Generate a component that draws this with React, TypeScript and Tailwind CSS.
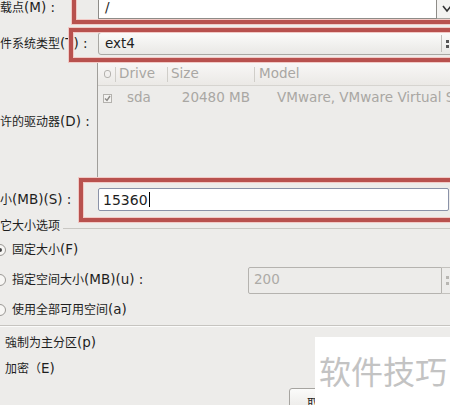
// Chinese glyphs in the screenshot are narrower than the Latin text around them,
// so CJK runs get their own smaller size.
function T({ s }: { s: string }) {
  const parts = s.split(/([\u3000-\u9fff\uff00-\uffef]+)/);
  return (
    <>
      {parts.map((p, i) =>
        /[\u3000-\u9fff\uff00-\uffef]/.test(p) ? (
          <span key={i} className="text-[12px]">
            {p}
          </span>
        ) : (
          <span key={i}>{p}</span>
        )
      )}
    </>
  );
}

export default function App() {
  const redBox =
    "absolute border-[4px] border-[#b8514e] shadow-[0_0_0_1px_#f2c9c5,inset_0_0_0_1px_#f2c9c5] pointer-events-none";

  return (
    <div className="relative w-[450px] h-[405px] overflow-hidden bg-[#edecea] text-[13.5px] leading-none text-[#1e1e1e] font-['DejaVu_Sans','Noto_Sans_CJK_SC',sans-serif]">
      <div className="flex flex-col">
        {/* mount point */}
        <div className="flex items-center h-[26px] -mt-[7px]">
          <div className="w-[98px] shrink-0 pt-[3px] whitespace-nowrap"><T s="载点(M) :" /></div>
          <div className="relative flex-1 flex h-full -mr-[10px]">
            <div className="flex-1 flex items-center bg-white border border-[#8e8c88] px-[6px] pt-[4px]">/</div>
            <div className="w-[23px] flex items-center pl-[5px] pt-[6px] bg-[#f4f3f1] border-y border-r border-[#a4a29e]">
              <svg width="10" height="8" viewBox="0 0 10 8">
                <path d="M1 1 L5 6 L9 1" stroke="#333" strokeWidth="1.6" fill="none" />
              </svg>
            </div>
            <div className={`${redBox} -left-[26px] -top-[8px] -bottom-[5px] right-0`} />
          </div>
        </div>

        {/* filesystem type */}
        <div className="flex items-center h-[23px] mt-[13px]">
          <div className="w-[98px] shrink-0 whitespace-nowrap"><T s="件系统类型(T) :" /></div>
          <div className="relative flex-1 flex h-full -mr-[10px]">
            <div className="flex-1 flex items-center rounded-[3px] border border-[#a9a7a3] bg-gradient-to-b from-[#fbfbfa] to-[#e9e8e5]">
              <div className="flex-1 pl-[6px]">ext4</div>
              <div className="w-[18px] h-[17px] border-l border-[#c2c0bc] flex flex-col items-start pl-[4px] justify-center gap-[2px]">
                <div className="w-[3px] h-[3px] bg-[#555]" />
                <div className="w-[3px] h-[3px] bg-[#555]" />
              </div>
            </div>
            <div className={`${redBox} -left-[29px] -top-[4px] -bottom-[7px] right-0`} />
          </div>
        </div>

        {/* drives */}
        <div className="flex items-center h-[117px] mt-[8px]">
          <div className="w-[97px] shrink-0 whitespace-nowrap"><T s="许的驱动器(D) :" /></div>
          <div className="flex-1 h-full border-l border-[#a09e9a] -mr-[10px] flex flex-col text-[#a9a7a3]">
            <div className="h-[23px] flex items-center bg-gradient-to-b from-[#f8f7f6] to-[#ebe9e6] border-b border-[#d6d4d0]">
              <div className="w-[17px] flex justify-center pl-[2px]">
                <div className="w-[7px] h-[8px] rounded-[3px] border border-[#b4b2ae]" />
              </div>
              <div className="w-[52px] h-[15px] border-l border-[#d0cec9] pl-[3px] flex items-center">Drive</div>
              <div className="w-[87px] h-[15px] border-l border-[#d0cec9] pl-[3px] flex items-center">Size</div>
              <div className="flex-1 h-[15px] border-l border-[#d0cec9] pl-[4px] flex items-center">Model</div>
            </div>
            <div className="h-[24px] flex items-center whitespace-nowrap">
              <div className="w-[17px] flex justify-center pl-[2px]">
                <div className="w-[9px] h-[9px] border border-[#b4b2ae] bg-[#f3f2f0] flex items-center justify-center">
                  <svg width="7" height="7" viewBox="0 0 7 7">
                    <path d="M1 3.5 L3 5.5 L6 1" stroke="#8d8b87" strokeWidth="1.4" fill="none" />
                  </svg>
                </div>
              </div>
              <div className="w-[52px] pl-[12px]">sda</div>
              <div className="w-[87px] text-right pr-[4px]">20480 MB</div>
              <div className="flex-1 pl-[23px]">VMware, VMware Virtual S</div>
            </div>
          </div>
        </div>

        {/* size */}
        <div className="flex items-center h-[23px] mt-[8px]">
          <div className="w-[98px] shrink-0 whitespace-nowrap"><T s="小(MB)(S) :" /></div>
          <div className="relative flex-1 flex h-full -mr-[10px]">
            <div className="flex items-center w-[351px] bg-white border border-[#8a92a8] rounded-[2px] pl-[4px] text-[14px]">
              15360
              <div className="w-px h-[15px] bg-black ml-[1px]" />
            </div>
            <div className={`${redBox} -left-[19px] -top-[10px] -bottom-[11px] right-0`} />
          </div>
        </div>

        {/* other size options */}
        <div className="flex items-center h-[18px] mt-[6px]">
          <div className="whitespace-nowrap"><T s="它大小选项" /></div>
          <div className="flex-1 h-px bg-[#c9c7c3] mt-[4px] ml-[3px]" />
        </div>

        <div className="flex items-center h-[30px]">
          <div className="w-[12px] h-[12px] -ml-[6px] rounded-full border border-[#9a9894] bg-[#f7f6f4] flex items-center justify-center">
            <div className="w-[4px] h-[4px] rounded-full bg-[#444]" />
          </div>
          <div className="ml-[6px]"><T s="固定大小(F)" /></div>
        </div>

        <div className="flex items-center h-[30px]">
          <div className="w-[12px] h-[12px] -ml-[6px] rounded-full border border-[#9a9894] bg-[#f7f6f4]" />
          <div className="ml-[6px] whitespace-nowrap"><T s="指定空间大小(MB)(u) :" /></div>
          <div className="ml-auto w-[212px] h-[27px] -mr-[10px] flex">
            <div className="flex-1 flex items-center border border-[#b5b3af] rounded-l-[2px] pl-[5px] text-[#acaaa6]">200</div>
            <div className="w-[18px] border-y border-r border-[#c3c1bd] flex flex-col items-start pl-[4px] justify-center gap-[3px]">
              <div className="w-[3px] h-[3px] bg-[#b8b6b2]" />
              <div className="w-[3px] h-[3px] bg-[#b8b6b2]" />
            </div>
          </div>
        </div>

        <div className="flex items-center h-[30px]">
          <div className="w-[12px] h-[12px] -ml-[6px] rounded-full border border-[#9a9894] bg-[#f7f6f4]" />
          <div className="ml-[6px]"><T s="使用全部可用空间(a)" /></div>
        </div>

        <div className="h-px bg-[#c6c4c0]" />
        <div className="h-px bg-[#fbfbfa]" />

        <div className="flex items-center h-[24px] mt-[4px] pl-[5px]"><T s="強制为主分区(p)" /></div>
        <div className="flex items-center h-[24px] mt-[2px] pl-[5px]"><T s="加密（E)" /></div>

        <div className="flex mt-[7px] pl-[289px]">
          <div className="w-[100px] h-[32px] rounded-[3px] border border-[#a6a4a0] bg-gradient-to-b from-[#fbfbfa] to-[#e4e2df] flex items-center pl-[17px]">
            <T s="取消(C)" />
          </div>
        </div>
      </div>

      {/* watermark */}
      <div className="absolute left-[315px] top-[337px] right-0 bottom-0 bg-white pl-[4px] pt-[14px] text-[32px] leading-[38px] text-[#c3c3c3] font-['Noto_Sans_CJK_SC',sans-serif] whitespace-nowrap">
        软件技巧
      </div>
    </div>
  );
}
